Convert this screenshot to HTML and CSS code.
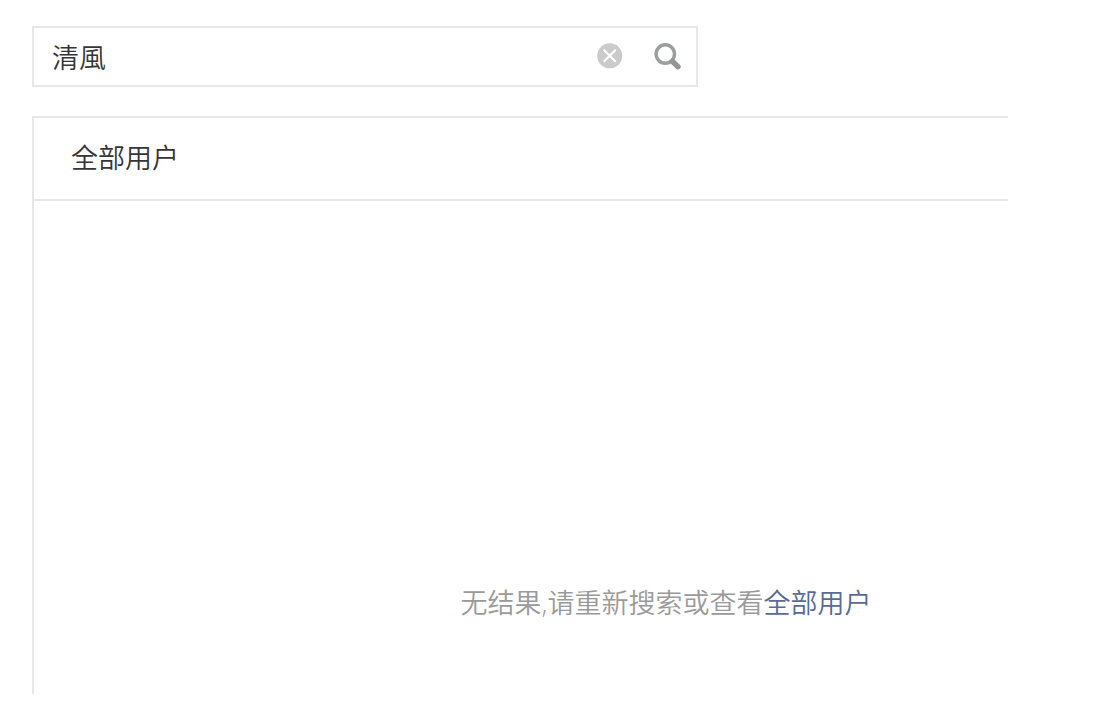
FILE: index.html
```html
<!DOCTYPE html>
<html lang="zh-CN">
<head>
<meta charset="utf-8">
<meta name="viewport" content="width=device-width, initial-scale=1">
<title>用户管理</title>
<link rel="stylesheet" href="styles.css">
</head>
<body>
<main class="page">
  <form class="search" role="search">
    <input class="search-input" type="text" aria-label="搜索用户" value="清風">
    <button class="icon-button" type="reset" aria-label="清除">
      <svg width="28" height="28" viewBox="0 0 28 28" aria-hidden="true">
        <circle cx="13.7" cy="13.8" r="12.5" fill="#cbcbcb"/>
        <path d="M7.7 7.8l12 12M19.7 7.8l-12 12" stroke="#fff" stroke-width="2" fill="none"/>
      </svg>
    </button>
    <button class="icon-button" type="submit" aria-label="搜索">
      <svg width="28" height="28" viewBox="0 0 28 28" aria-hidden="true">
        <circle cx="11.3" cy="12" r="9.2" fill="none" stroke="#9b9d9e" stroke-width="3.4"/>
        <path d="M18.5 19.5l5.5 5.2" stroke="#929495" stroke-width="5.4" stroke-linecap="round" fill="none"/>
      </svg>
    </button>
  </form>
  <section class="panel">
    <h1 class="panel-title">全部用户</h1>
    <p class="empty">无结果,请重新搜索或查看<a class="link" href="#">全部用户</a></p>
  </section>
</main>
</body>
</html>
```
FILE: styles.css
```css
* {
  box-sizing: border-box;
}

body {
  margin: 0;
  background: #fff;
  color: #353535;
  font-family: "Open Sans", "Noto Sans CJK SC", sans-serif;
  font-size: 27px;
  font-weight: 350;
  line-height: 40px;
}

.page {
  display: flex;
  flex-direction: column;
  gap: 29px;
  min-height: 100vh;
  padding: 26px 91px 28px 32px;
}

.search {
  display: flex;
  align-items: center;
  gap: 30px;
  width: 100%;
  max-width: 666px;
  padding: 9px 14px 8px 18px;
  border: 2px solid #e7e7eb;
}

.search-input {
  flex: 1;
  min-width: 0;
  height: 40px;
  padding: 2px 0 0;
  border: 0;
  outline: 0;
  background: transparent;
  color: inherit;
  font: inherit;
}

.icon-button {
  display: flex;
  padding: 0 0 2px;
  border: 0;
  background: transparent;
  cursor: pointer;
}

.panel {
  display: flex;
  flex: 1;
  flex-direction: column;
  border-top: 2px solid #e7e7eb;
  border-left: 2px solid #e7e7eb;
}

.panel-title {
  margin: 0;
  padding: 20px 37px 21px;
  border-bottom: 2px solid #e7e7eb;
  font-size: 27px;
  font-weight: 350;
}

.empty {
  margin: auto 0 0;
  padding: 40px 0 71px 290px;
  color: #9a9a9a;
  text-align: center;
}

.link {
  color: #576b95;
  text-decoration: none;
}
```
